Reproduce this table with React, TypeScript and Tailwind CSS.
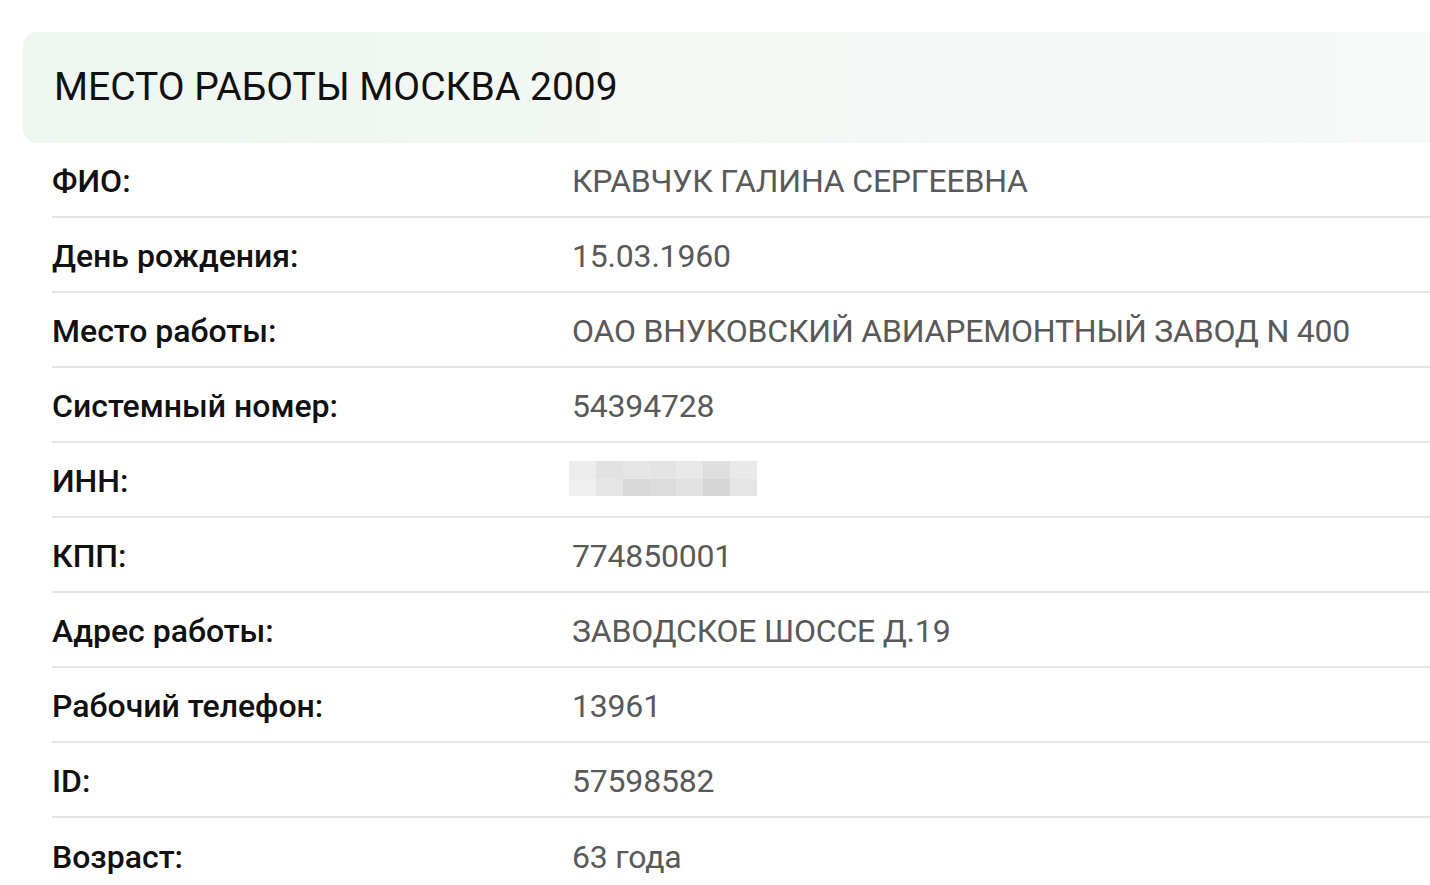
import React from "react";

const rows: { label: string; value: string | null }[] = [
  { label: "ФИО:", value: "КРАВЧУК ГАЛИНА СЕРГЕЕВНА" },
  { label: "День рождения:", value: "15.03.1960" },
  { label: "Место работы:", value: "ОАО ВНУКОВСКИЙ АВИАРЕМОНТНЫЙ ЗАВОД N 400" },
  { label: "Системный номер:", value: "54394728" },
  { label: "ИНН:", value: null },
  { label: "КПП:", value: "774850001" },
  { label: "Адрес работы:", value: "ЗАВОДСКОЕ ШОССЕ Д.19" },
  { label: "Рабочий телефон:", value: "13961" },
  { label: "ID:", value: "57598582" },
  { label: "Возраст:", value: "63 года" },
];

// pixelated placeholder for hidden value
const blurTop = ["#ececec", "#e2e2e2", "#e6e6e6", "#e4e4e4", "#e8e8e8", "#dedede", "#e9e9e9"];
const blurBottom = ["#efefef", "#e6e6e6", "#d9d9d9", "#dcdcdc", "#e1e1e1", "#d6d6d6", "#e5e5e5"];

function Blurred() {
  return (
    <div className="flex flex-col w-[188px] h-[35px] -ml-[3px] -mt-[5px]">
      <div className="flex flex-1">
        {blurTop.map((c, i) => (
          <div key={i} className="flex-1" style={{ background: c }} />
        ))}
      </div>
      <div className="flex flex-1">
        {blurBottom.map((c, i) => (
          <div key={i} className="flex-1" style={{ background: c }} />
        ))}
      </div>
    </div>
  );
}

export default function App() {
  return (
    <div className="min-h-screen bg-white overflow-hidden font-['Roboto',_'Liberation_Sans',_sans-serif]">
      <div className="pt-8 pl-[23px]">
        {/* Header card */}
        <div className="h-[111px] w-[1440px] rounded-l-[14px] bg-gradient-to-r from-[#edf6f0] via-[#f4f8f5] to-[#f7f8f8] flex items-center pl-[31px]">
          <h1 className="text-[39px] leading-none text-[#111] tracking-[0px]">МЕСТО РАБОТЫ МОСКВА 2009</h1>
        </div>

        {/* Rows */}
        <div className="pl-[29px]">
          {rows.map((r, i) => (
            <div
              key={r.label}
              className={
                "flex items-center h-[75px] pt-[3px] " +
                (i < rows.length - 1 ? "border-b-2 border-[#e5e5e5]" : "")
              }
            >
              <div className="w-[520px] text-[32px] leading-none font-medium text-[#111]">{r.label}</div>
              <div className="text-[32px] leading-none text-[#595959] tracking-[-0.2px]">
                {r.value === null ? <Blurred /> : r.value}
              </div>
            </div>
          ))}
        </div>
      </div>
    </div>
  );
}
